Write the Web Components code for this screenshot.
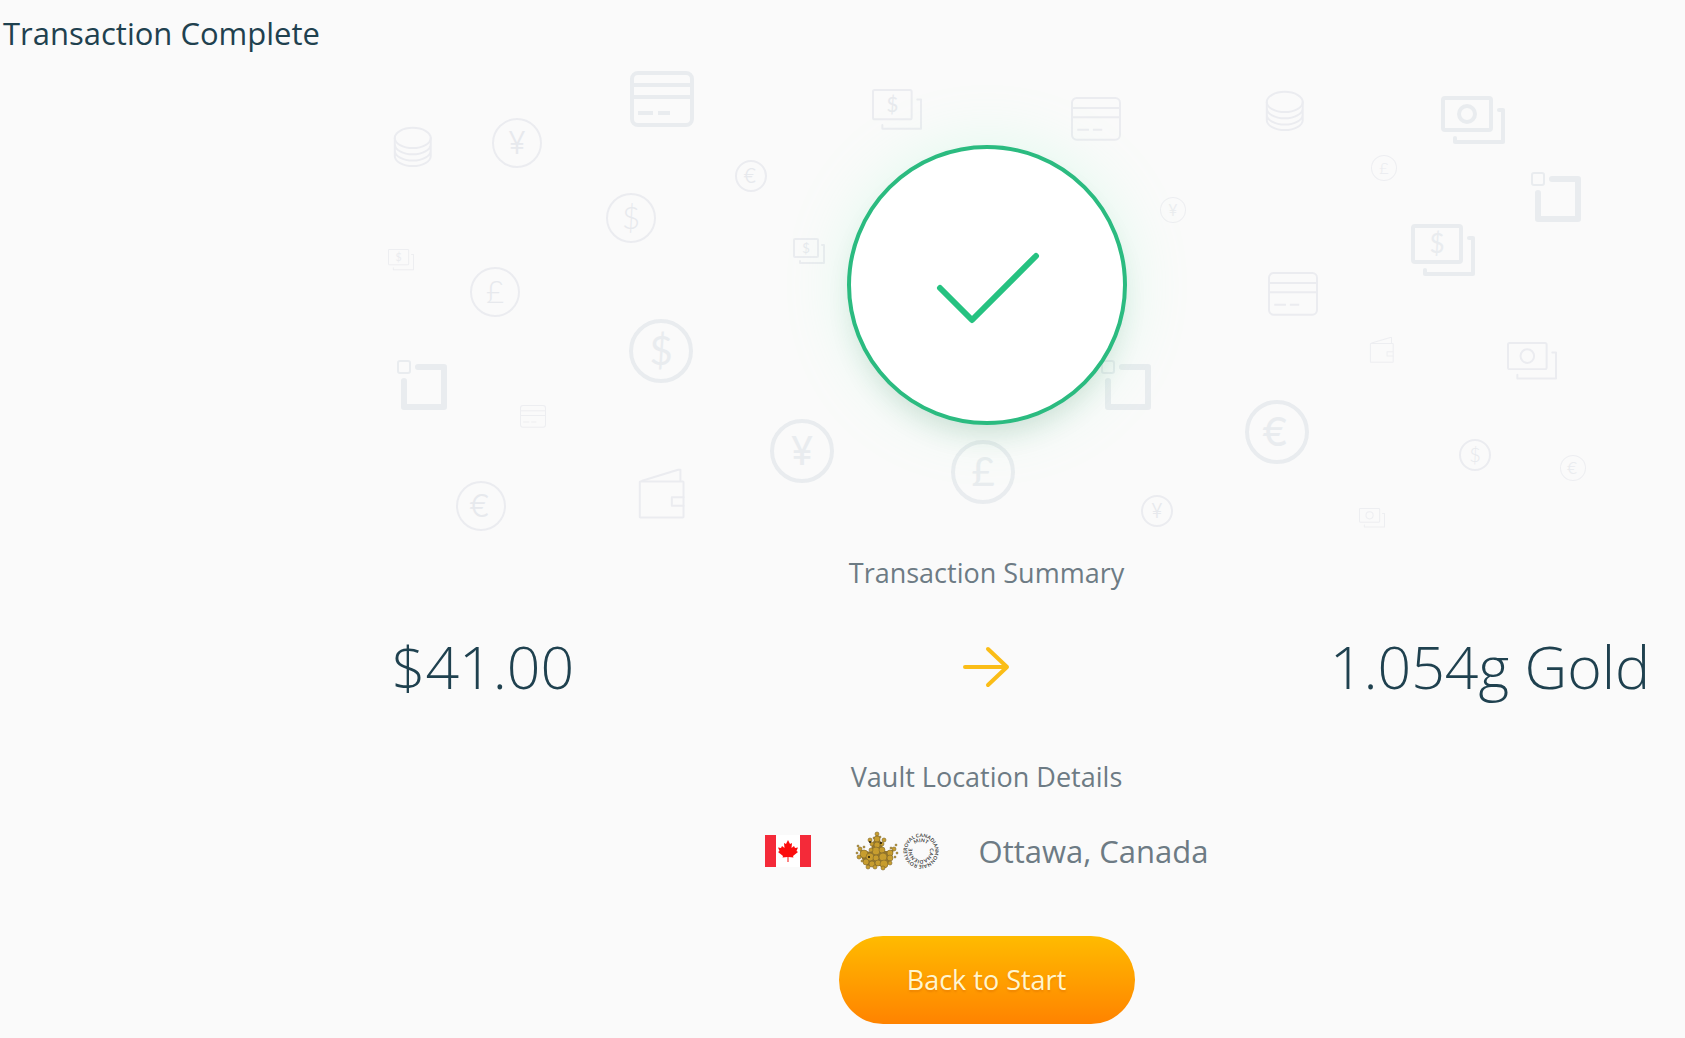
<!DOCTYPE html>
<html lang="en">
<head>
<meta charset="utf-8">
<title>Transaction Complete</title>
<style>
  body {
    margin: 0;
    background: #fafafa;
    color: #1f414f;
    font-family: "Open Sans", "Noto Sans", sans-serif;
  }
</style>
</head>
<body>
<transaction-complete></transaction-complete>

<script>
// Backdrop icons: type, left, top, size, line width, optional currency sign
const BACKDROP = [
  ['coins', 70, 67, 50, 2],
  ['coin', 168, 58, 50, 2, '¥'],
  ['card', 306, 11, 64, 4],
  ['coin', 282, 133, 50, 2, '$'],
  ['cash', 64, 189, 26, 1, '$'],
  ['coin', 146, 207, 50, 2, '£'],
  ['coin', 305, 259, 64, 4, '$'],
  ['logo', 73, 300, 64, 6],
  ['card', 196, 345, 26, 1],
  ['coin', 132, 421, 50, 2, '€'],
  ['wallet', 315, 409, 50, 2],
  ['cash', 548, 29, 50, 2, '$'],
  ['card', 747, 37, 50, 2],
  ['coin', 411, 100, 32, 2, '€'],
  ['cash', 469, 178, 32, 2, '$'],
  ['coin', 836, 137, 26, 1, '¥'],
  ['coin', 446, 359, 64, 4, '¥'],
  ['coin', 627, 380, 64, 4, '£'],
  ['logo', 777, 300, 64, 6],
  ['coin', 817, 435, 32, 2, '¥'],
  ['coins', 942, 31, 50, 2],
  ['bill', 1117, 36, 64, 4],
  ['coin', 1047, 95, 26, 1, '£'],
  ['logo', 1207, 112, 64, 6],
  ['cash', 1087, 164, 64, 4, '$'],
  ['card', 944, 212, 50, 2],
  ['wallet', 1046, 277, 26, 1],
  ['bill', 1183, 282, 50, 2],
  ['coin', 921, 340, 64, 4, '€'],
  ['coin', 1135, 379, 32, 2, '$'],
  ['coin', 1236, 395, 26, 1, '€'],
  ['bill', 1035, 448, 26, 1],
];

// Every shape is drawn on a 64 unit grid, w is the line width in those units
const SHAPES = {
  coin: (w, sign) => `
    <circle cx="32" cy="32" r="${32 - w / 2}"/>
    <text x="${sign === '€' ? 30 : 32}" y="46" class="${sign === '€' || sign === '¥' ? 'wide' : ''}">${sign}</text>`,
  card: (w) => `
    <rect x="${w / 2}" y="${w / 2}" width="${64 - w}" height="${56 - w}" rx="6"/>
    <path stroke-linecap="butt" d="M0 14H64M0 26H64M8 42H23M28 42H40"/>`,
  cash: (w, sign) => `
    <rect x="${w / 2}" y="${w / 2}" width="${52 - w}" height="${40 - w}" rx="2"/>
    <path d="M58 ${12 + w / 2}H${64 - w / 2}V${52 - w / 2}H${12 + w / 2}V46"/>
    <text x="26" y="29" class="note">${sign}</text>`,
  bill: (w) => `
    <rect x="${w / 2}" y="${w / 2}" width="${52 - w}" height="${36 - w}" rx="2"/>
    <circle cx="26" cy="18" r="${10 - w / 2}"/>
    <path d="M58 ${12 + w / 2}H${64 - w / 2}V${48 - w / 2}H${12 + w / 2}V42"/>`,
  wallet: () => `
    <rect x="1" y="16" width="56" height="46" rx="1"/>
    <path d="M4 15L50 1H53V15M57 36H42V47H57"/>`,
  coins: () => `
    <ellipse cx="24" cy="14" rx="23" ry="13"/>
    <path d="M1 14V37A23 13 0 0 0 47 37V14M1 22A23 13 0 0 0 47 22M1 30A23 13 0 0 0 47 30"/>`,
  logo: () => `
    <rect x="1" y="1" width="12" height="12" rx="2" stroke-width="2"/>
    <path d="M21 7H47V47H7V21"/>`,
};

class MoneyBackdrop extends HTMLElement {
  constructor() {
    super();
    this.attachShadow({ mode: 'open' });
    this.render();
  }

  drawIcon([type, x, y, size, line, sign]) {
    const scale = size / 64;
    const width = line / scale;
    return `
      <g transform="translate(${x} ${y}) scale(${scale})" stroke-width="${width}"
         opacity="${size < 30 ? 0.8 : 1}" class="${line > 2 ? 'bold' : 'thin'}">
        ${SHAPES[type](width, sign)}
      </g>`;
  }

  render() {
    this.shadowRoot.innerHTML = `
      <style>
        :host { display: grid; align-items: center; justify-items: center; }
        svg, slot { grid-area: 1 / 1; }
        svg {
          display: block;
          width: 100%;
          fill: none;
          stroke-linecap: round;
          stroke-linejoin: round;
        }
        .bold { stroke: #e9ecef; color: #e9ecef; font-weight: 400; }
        .thin { stroke: #ebecf0; color: #e7e9ed; font-weight: 300; }
        text {
          fill: currentColor;
          stroke: none;
          text-anchor: middle;
          font-family: Lato, sans-serif;
          font-size: 40px;
        }
        .wide { font-family: Inter, Lato, sans-serif; }
        .note { font-size: 26px; font-weight: 400; }
      </style>
      <svg viewBox="0 0 1325 480" aria-hidden="true">
        ${BACKDROP.map((icon) => this.drawIcon(icon)).join('')}
      </svg>
      <slot></slot>
    `;
  }
}

class SuccessBadge extends HTMLElement {
  constructor() {
    super();
    this.attachShadow({ mode: 'open' });
    this.shadowRoot.innerHTML = `
      <style>
        :host {
          grid-area: 1 / 1;
          box-sizing: border-box;
          display: block;
          width: 280px;
          height: 280px;
          margin-bottom: 30px;
          border: 4px solid #2bbb80;
          border-radius: 50%;
          background: #fff;
          box-shadow: 0 16px 28px -8px rgba(30, 90, 55, 0.16), 0 0 60px rgba(150, 255, 205, 0.25);
        }
        svg { display: block; }
      </style>
      <svg width="272" height="272" viewBox="0 0 272 272" role="img" aria-label="Success">
        <path d="M89 139L121 171L185 107" fill="none" stroke="#26c281" stroke-width="6"
              stroke-linecap="round" stroke-linejoin="round"/>
      </svg>
    `;
  }
}

class SectionTitle extends HTMLElement {
  constructor() {
    super();
    this.attachShadow({ mode: 'open' });
    this.shadowRoot.innerHTML = `
      <style>
        :host { display: block; text-align: center; color: #6d7b84; }
        h2 { margin: 0; font-size: 27px; line-height: 36px; font-weight: 400; }
      </style>
      <h2><slot></slot></h2>
    `;
  }
}

class AmountSwap extends HTMLElement {
  constructor() {
    super();
    this.attachShadow({ mode: 'open' });
    this.shadowRoot.innerHTML = `
      <style>
        :host {
          display: grid;
          grid-template-columns: 24% 1fr 24%;
          align-items: center;
          justify-items: center;
          font-size: 59px;
          line-height: 80px;
          font-weight: 300;
          white-space: nowrap;
        }
        svg { display: block; }
      </style>
      <slot name="from"></slot>
      <svg width="48" height="44" viewBox="0 0 48 44" fill="none" stroke="#fabd17" stroke-width="4"
           stroke-linecap="round" stroke-linejoin="round" aria-hidden="true">
        <path d="M2 23H44M25 5L44 23L25 41"/>
      </svg>
      <slot name="to"></slot>
    `;
  }
}

class VaultLocation extends HTMLElement {
  constructor() {
    super();
    this.attachShadow({ mode: 'open' });
    this.render();
  }

  // Gold maple leaf built out of small discs
  leafDiscs() {
    const discs = [
      [22, 3, 2], [19, 7, 1], [25, 6, 1], [22, 8, 3], [15, 9, 2], [29, 9, 2], [17, 13, 2],
      [27, 13, 2], [22, 14, 3], [21, 20, 4], [27, 19, 3], [16, 19, 2], [3, 15, 1],
      [5, 18, 2], [2, 22, 1], [9, 16, 1], [9, 23, 4], [4, 26, 2], [15, 26, 4], [21, 27, 3],
      [28, 26, 4], [35, 22, 3], [36, 17, 1], [41, 14, 1], [39, 18, 2], [42, 22, 1], [35, 27, 3],
      [40, 26, 1], [11, 31, 3], [17, 33, 3], [23, 32, 3], [29, 33, 4], [35, 32, 2], [13, 36, 2],
      [20, 36, 2], [28, 37, 2], [7, 30, 1],
    ];
    return discs.map(([x, y, r]) => `<circle cx="${x}" cy="${y}" r="${r}"/>`).join('');
  }

  render() {
    this.shadowRoot.innerHTML = `
      <style>
        :host {
          display: flex;
          align-items: center;
          justify-content: center;
          color: #6d7b84;
          font-size: 31px;
          line-height: 40px;
        }
        svg { display: block; }
        .mint { display: flex; align-items: center; gap: 4px; margin: 0 40px 0 44px; }
        .ring { fill: #444; font: 700 5px Lato, sans-serif; text-anchor: middle; }
      </style>
      <svg width="46" height="32" viewBox="0 0 46 32" role="img" aria-label="Flag of Canada">
        <rect width="46" height="32" fill="#fff"/>
        <path d="M0 0H11V32H0ZM35 0H46V32H35Z" fill="#f42a39"/>
        <path d="M23 5L25 9L27 8L26.500 13L29 11L30 13L33 12.500L31.500 16L33 17L28 21L28.500 22.500L23.500 22V27H22.500V22L17.500 22.500L18 21L13 17L14.500 16L13 12.500L16 13L17 11L19.500 13L19 8L21 9Z" fill="#fb0d0d"/>
      </svg>
      <div class="mint">
        <svg width="44" height="40" viewBox="0 0 44 40" fill="#c79d2e" stroke="#7d662c" stroke-width="0.6" role="img" aria-label="Maple leaf">
          <path stroke="none" d="M22 3L27 13L28 20L35 20L39 18L36 29L32 35H12L7 28L5 19L16 21L17 13Z" fill="#94752b"/>
          ${this.leafDiscs()}
          <g fill="#221a08" stroke="none">
            <circle cx="15" cy="11" r="1"/><circle cx="26" cy="12" r="1"/><circle cx="14" cy="26" r="1"/>
          </g>
        </svg>
        <svg class="ring" width="36" height="40" viewBox="-18 -20 36 40" overflow="visible">
          <defs>
            <path id="outer" d="M0 14A14 14 0 0 1 0 -14A14 14 0 0 1 0 14"/>
            <path id="outer-low" d="M0 -14A14 14 0 0 1 0 14A14 14 0 0 1 0 -14"/>
            <path id="inner" d="M0 9A9 9 0 0 1 0 -9A9 9 0 0 1 0 9"/>
            <path id="inner-low" d="M0 -9A9 9 0 0 1 0 9A9 9 0 0 1 0 -9"/>
          </defs>
          <text><textPath href="#outer" startOffset="50%">ROYAL CANADIAN</textPath></text>
          <text><textPath href="#outer-low" startOffset="50%">MONNAIE ROYALE</textPath></text>
          <text><textPath href="#inner" startOffset="50%">MINT</textPath></text>
          <text><textPath href="#inner-low" startOffset="50%">CANADIENNE</textPath></text>
        </svg>
      </div>
      <slot></slot>
    `;
  }
}

class PillButton extends HTMLElement {
  constructor() {
    super();
    this.attachShadow({ mode: 'open' });
    this.shadowRoot.innerHTML = `
      <style>
        :host { display: block; }
        button {
          display: block;
          width: 296px;
          height: 88px;
          padding: 0;
          border: 0;
          border-radius: 44px;
          background: linear-gradient(#ffbb00, #ff8300);
          color: #fff6cf;
          font: inherit;
          font-size: 27px;
          line-height: 36px;
          text-shadow: 0 2px 2px rgba(200, 90, 0, 0.3);
          cursor: pointer;
        }
      </style>
      <button type="button"><slot></slot></button>
    `;
  }
}

class TransactionComplete extends HTMLElement {
  constructor() {
    super();
    this.attachShadow({ mode: 'open' });
    this.render();
  }

  render() {
    this.shadowRoot.innerHTML = `
      <style>
        :host { display: block; }
        h1 {
          margin: 0;
          padding: 13px 3px 7px;
          font-size: 31px;
          line-height: 40px;
          font-weight: 400;
        }
        main {
          display: flex;
          flex-direction: column;
          padding: 0 36px 12px 324px;
        }
        money-backdrop { margin-bottom: 15px; }
        amount-swap { margin: 35px 0 53px; }
        vault-location { margin: 36px 0 65px; }
        pill-button { align-self: center; }
      </style>
      <h1>Transaction Complete</h1>
      <main>
        <money-backdrop><success-badge></success-badge></money-backdrop>
        <section-title>Transaction Summary</section-title>
        <amount-swap>
          <span slot="from">$41.00</span>
          <span slot="to">1.054g Gold</span>
        </amount-swap>
        <section-title>Vault Location Details</section-title>
        <vault-location>Ottawa, Canada</vault-location>
        <pill-button>Back to Start</pill-button>
      </main>
    `;
  }
}

customElements.define('money-backdrop', MoneyBackdrop);
customElements.define('success-badge', SuccessBadge);
customElements.define('section-title', SectionTitle);
customElements.define('amount-swap', AmountSwap);
customElements.define('vault-location', VaultLocation);
customElements.define('pill-button', PillButton);
customElements.define('transaction-complete', TransactionComplete);
</script>
</body>
</html>
